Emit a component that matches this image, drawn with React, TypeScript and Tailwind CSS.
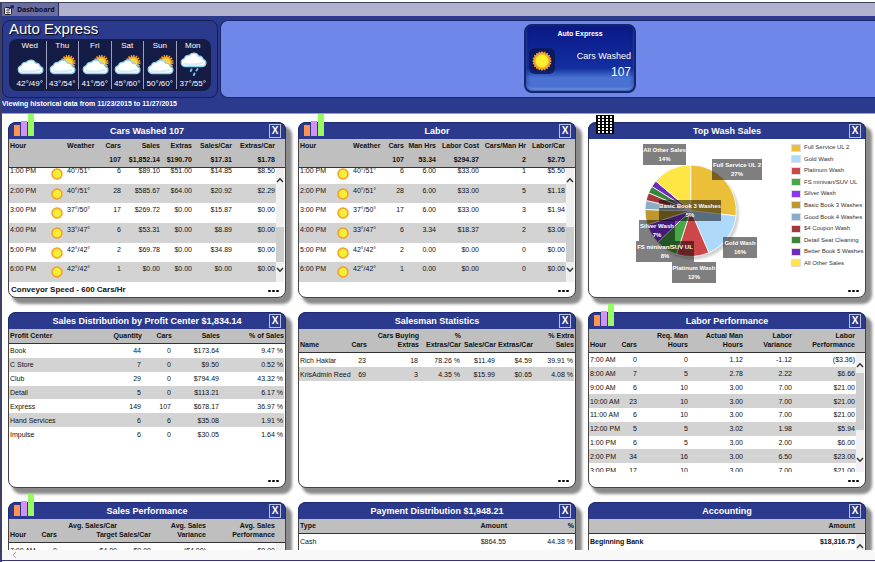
import type { ReactNode } from 'react';
import clsx from 'clsx';

// -------------------------------------------------------------------- data --

type Column = {
  label: string[];
  width?: string;
  total?: string;
  left?: boolean;
};

type Sky = 'cloudy' | 'partly' | 'rain';

const FORECAST: { day: string; temp: string; sky: Sky }[] = [
  { day: 'Wed', temp: '42°/49°', sky: 'cloudy' },
  { day: 'Thu', temp: '43°/54°', sky: 'partly' },
  { day: 'Fri', temp: '41°/56°', sky: 'partly' },
  { day: 'Sat', temp: '45°/60°', sky: 'partly' },
  { day: 'Sun', temp: '50°/60°', sky: 'partly' },
  { day: 'Mon', temp: '37°/55°', sky: 'rain' },
];

const CARS_COLUMNS: Column[] = [
  { label: ['Hour'], left: true, total: '' },
  { label: ['Weather'], left: true, width: 'w-[54px]', total: '' },
  { label: ['Cars'], width: 'w-[18px]', total: '107' },
  { label: ['Sales'], width: 'w-[39px]', total: '$1,852.14' },
  { label: ['Extras'], width: 'w-[32px]', total: '$190.70' },
  { label: ['Sales/Car'], width: 'w-[40px]', total: '$17.31' },
  { label: ['Extras/Car'], width: 'w-[43px]', total: '$1.78' },
];

const CARS_ROWS = [
  ['1:00 PM', '40°/51°', '6', '$89.10', '$51.00', '$14.85', '$8.50'],
  ['2:00 PM', '40°/51°', '28', '$585.67', '$64.00', '$20.92', '$2.29'],
  ['3:00 PM', '37°/50°', '17', '$269.72', '$0.00', '$15.87', '$0.00'],
  ['4:00 PM', '33°/47°', '6', '$53.31', '$0.00', '$8.89', '$0.00'],
  ['5:00 PM', '42°/42°', '2', '$69.78', '$0.00', '$34.89', '$0.00'],
  ['6:00 PM', '42°/42°', '1', '$0.00', '$0.00', '$0.00', '$0.00'],
];

const LABOR_COLUMNS: Column[] = [
  { label: ['Hour'], left: true, total: '' },
  { label: ['Weather'], left: true, width: 'w-[49px]', total: '' },
  { label: ['Cars'], width: 'w-[20px]', total: '107' },
  { label: ['Man Hrs'], width: 'w-[32px]', total: '53.34' },
  { label: ['Labor Cost'], width: 'w-[43px]', total: '$294.37' },
  { label: ['Cars/Man Hr'], width: 'w-[47px]', total: '2' },
  { label: ['Labor/Car'], width: 'w-[39px]', total: '$2.75' },
];

const LABOR_ROWS = [
  ['1:00 PM', '40°/51°', '6', '6.00', '$33.00', '1', '$5.50'],
  ['2:00 PM', '40°/51°', '28', '6.00', '$33.00', '5', '$1.18'],
  ['3:00 PM', '37°/50°', '17', '6.00', '$33.00', '3', '$1.94'],
  ['4:00 PM', '33°/47°', '6', '3.34', '$18.37', '2', '$3.06'],
  ['5:00 PM', '42°/42°', '2', '0.00', '$0.00', '0', '$0.00'],
  ['6:00 PM', '42°/42°', '1', '0.00', '$0.00', '0', '$0.00'],
];

const PROFIT_COLUMNS: Column[] = [
  { label: ['Profit Center'], left: true },
  { label: ['Quantity'], width: 'w-[40px]' },
  { label: ['Cars'], width: 'w-[30px]' },
  { label: ['Sales'], width: 'w-[48px]' },
  { label: ['% of Sales'], width: 'w-[64px]' },
];

const PROFIT_ROWS = [
  ['Book', '44', '0', '$173.64', '9.47 %'],
  ['C Store', '7', '0', '$9.50', '0.52 %'],
  ['Club', '29', '0', '$794.49', '43.32 %'],
  ['Detail', '5', '0', '$113.21', '6.17 %'],
  ['Express', '149', '107', '$678.17', '36.97 %'],
  ['Hand Services', '6', '6', '$35.08', '1.91 %'],
  ['Impulse', '6', '0', '$30.05', '1.64 %'],
];

const SALESMAN_COLUMNS: Column[] = [
  { label: ['Name'], left: true },
  { label: ['Cars'], width: 'w-[18px]' },
  { label: ['Cars Buying', 'Extras'], width: 'w-[52px]' },
  { label: ['%', 'Extras/Car'], width: 'w-[42px]' },
  { label: ['Sales/Car'], width: 'w-[35px]' },
  { label: ['Extras/Car'], width: 'w-[37px]' },
  { label: ['% Extra', 'Sales'], width: 'w-[41px]' },
];

const SALESMAN_ROWS = [
  ['Rich Haklar', '23', '18', '78.26 %', '$11.49', '$4.59', '39.91 %'],
  ['KrisAdmin Reed', '69', '3', '4.35 %', '$15.99', '$0.65', '4.08 %'],
];

const PERFORMANCE_COLUMNS: Column[] = [
  { label: ['Hour'], left: true },
  { label: ['Cars'], width: 'w-[18px]' },
  { label: ['Req. Man', 'Hours'], width: 'w-[51px]' },
  { label: ['Actual Man', 'Hours'], width: 'w-[55px]' },
  { label: ['Labor', 'Variance'], width: 'w-[49px]' },
  { label: ['Labor', 'Performance'], width: 'w-[63px]' },
];

const PERFORMANCE_ROWS = [
  ['7:00 AM', '0', '0', '1.12', '-1.12', '($3.36)'],
  ['8:00 AM', '7', '5', '2.78', '2.22', '$6.66'],
  ['9:00 AM', '6', '10', '3.00', '7.00', '$21.00'],
  ['10:00 AM', '23', '10', '3.00', '7.00', '$21.00'],
  ['11:00 AM', '6', '10', '3.00', '7.00', '$21.00'],
  ['12:00 PM', '5', '5', '3.02', '1.98', '$5.94'],
  ['1:00 PM', '6', '5', '3.00', '2.00', '$6.00'],
  ['2:00 PM', '34', '16', '3.00', '6.50', '$23.00'],
  ['3:00 PM', '17', '10', '3.00', '7.00', '$21.00'],
];

const SALES_PERFORMANCE_COLUMNS: Column[] = [
  { label: ['Hour'], left: true },
  { label: ['Cars'], width: 'w-[18px]' },
  { label: ['Avg. Sales/Car', 'Target'], width: 'w-[60px]' },
  { label: ['Sales/Car'], width: 'w-[34px]' },
  { label: ['Avg. Sales', 'Variance'], width: 'w-[55px]' },
  { label: ['Avg. Sales', 'Performance'], width: 'w-[69px]' },
];

const SALES_PERFORMANCE_ROWS = [['7:00 AM', '0', '$4.00', '$0.00', '($4.00)', '$0.00']];

const PAYMENT_COLUMNS: Column[] = [
  { label: ['Type'], left: true },
  { label: ['Amount'], width: 'w-[60px]' },
  { label: ['%'], width: 'w-[67px]' },
];

const ACCOUNTING_COLUMNS: Column[] = [
  { label: [''], left: true },
  { label: ['Amount'], width: 'w-[80px]' },
];

// share is the slice's part of the whole, in percent
const WASHES = [
  { name: 'Full Service UL 2', share: 26.8, color: '#ecbf3b' },
  { name: 'Gold Wash', share: 16.7, color: '#aed9fb' },
  { name: 'Platinum Wash', share: 11.5, color: '#cd474a' },
  { name: 'FS minivan/SUV UL', share: 7.8, color: '#48a848' },
  { name: 'Silver Wash', share: 7.2, color: '#8a35ee' },
  { name: 'Basic Book 3 Washes', share: 5.4, color: '#be982f' },
  { name: 'Good Book 4 Washes', share: 3.2, color: '#8badca' },
  { name: '$4 Coupon Wash', share: 2.8, color: '#a3383b' },
  { name: 'Detail Seat Cleaning', share: 2.5, color: '#39873a' },
  { name: 'Better Book 5 Washes', share: 2.3, color: '#6e2abe' },
  { name: 'All Other Sales', share: 13.8, color: '#ffe645' },
];

const PIE_LABELS = [
  { name: 'All Other Sales', pct: '14%', x: 54, y: 5, w: 43 },
  { name: 'Full Service UL 2', pct: '27%', x: 123, y: 20, w: 50 },
  { name: 'Silver Wash', pct: '7%', x: 50, y: 81, w: 36 },
  { name: 'FS minivan/SUV UL', pct: '8%', x: 47, y: 102, w: 58 },
  { name: 'Platinum Wash', pct: '12%', x: 83, y: 123, w: 44 },
  { name: 'Gold Wash', pct: '16%', x: 134, y: 98, w: 34 },
  { name: 'Basic Book 3 Washes', pct: '5%', x: 70, y: 61, w: 62 },
];

// ------------------------------------------------------------------- icons --

const CLOUD =
  'M6 19.5a4 4 0 0 1-.6-7.9 4 4 0 0 1 4.8-3.2 5.6 5.6 0 0 1 9.6.9 3.6 3.6 0 0 1 4.4 3.3 3.5 3.5 0 0 1-.6 6.9z';

function SkyIcon({ sky }: { sky: Sky }) {
  return (
    <svg viewBox="0 0 28 26" className="h-[26px] w-7" aria-hidden="true">
      {sky === 'partly' && (
        <>
          <circle cx="20" cy="11.500" r="6.500" fill="none" stroke="#f5a02c" strokeWidth="2" strokeDasharray="1.5 1" />
          <circle cx="20" cy="11.500" r="5.900" fill="#f8a52c" />
          <circle cx="20" cy="11.500" r="4.300" fill="#fdd83c" />
        </>
      )}
      <g transform={sky === 'rain' ? 'translate(0 -4)' : 'translate(0 3)'}>
        <path d={CLOUD} fill="#fff" stroke="#8fd0ec" strokeWidth="1.3" />
        <path d="M5 16.5q9 2 19-.5" fill="none" stroke="#d3eef9" strokeWidth="2" />
      </g>
      {sky === 'rain' && (
        <g stroke="#6cc0e8" strokeWidth="2" strokeLinecap="round">
          <path d="M12.500 18.500l-.8 1.500M18.500 18l-1 1.500M15.500 22.500l-.7 1.500" />
        </g>
      )}
    </svg>
  );
}

function SunIcon() {
  return (
    <svg viewBox="0 0 12 12" className="size-3 shrink-0" aria-hidden="true">
      <circle cx="6" cy="6" r="5" fill="#f8ee35" stroke="#f59a23" strokeWidth="1.400" />
    </svg>
  );
}

function BurstIcon() {
  const points = Array.from({ length: 40 }, (_, i) => {
    const a = (i * Math.PI) / 20;
    const r = i % 2 ? 8.3 : 10;
    return `${11 + r * Math.sin(a)},${11 - r * Math.cos(a)}`;
  }).join(' ');
  return (
    <svg viewBox="0 0 22 22" className="size-[22px]" aria-hidden="true">
      <polygon points={points} fill="#f9a12b" />
      <circle cx="11" cy="11" r="6.5" fill="#fbf02f" />
    </svg>
  );
}

function BarsIcon() {
  return (
    <svg viewBox="0 0 21 22" className="h-[22px] w-[21px]" aria-hidden="true">
      <rect x="0" y="11" width="6" height="11" fill="#ff9350" />
      <rect x="7" y="7" width="6" height="15" fill="#d191f5" />
      <rect x="14" y="0" width="6" height="22" fill="#97fb62" />
    </svg>
  );
}

function GridIcon() {
  return (
    <svg viewBox="-2 -1 20 20" className="h-5 w-5" aria-hidden="true">
      <rect width="18" height="19" fill="#000" />
      {[0, 1, 2, 3].map((c) =>
        [0, 1, 2, 3, 4, 5].map((r) => (
          <rect key={`${c}-${r}`} x={2 + c * 4} y={1 + r * 3} width="2" height="2" fill="#fff" />
        )),
      )}
    </svg>
  );
}

function Chevron({ down }: { down?: boolean }) {
  return (
    <svg viewBox="0 0 8 6" className="h-1.5 w-2" fill="none" stroke="#333" strokeWidth="1.400" aria-hidden="true">
      <path d={down ? 'M1 1l3 3.200L7 1' : 'M1 5l3-3.200L7 5'} />
    </svg>
  );
}

// -------------------------------------------------------------- components --

function Scrollbar({ thumb }: { thumb: string }) {
  return (
    <div className="flex w-2 shrink-0 flex-col bg-[#f0f0f0]">
      <button type="button" aria-label="Scroll up" className="flex h-5 shrink-0 items-center justify-center pt-1">
        <Chevron />
      </button>
      <div className="flex min-h-0 flex-1 flex-col">
        <div className={clsx('w-full shrink-0 bg-[#cdcdcd]', thumb)} />
      </div>
      <button type="button" aria-label="Scroll down" className="flex h-5 shrink-0 items-center justify-center pb-1">
        <Chevron down />
      </button>
    </div>
  );
}

type GridProps = {
  columns: Column[];
  rows: string[][];
  bodyHeight?: string;
  thumb?: string;
  weather?: boolean;
  bold?: boolean;
};

function DataGrid({ columns, rows, bodyHeight, thumb, weather, bold }: GridProps) {
  const hasTotals = columns.some((c) => c.total !== undefined);

  return (
    <>
      <div className={clsx('border-b border-[#333] bg-[#bfbfbf] pt-0.5 pb-[3px]', thumb && 'pr-[9px]')}>
        <table className="w-full table-fixed border-collapse leading-[9px] font-bold">
          <thead>
            <tr>
              {columns.map((c, i) => (
                <th
                  key={i}
                  scope="col"
                  className={clsx(
                    'px-px py-0 align-bottom whitespace-nowrap',
                    c.width,
                    c.left ? 'text-left' : 'text-right',
                    weather && i === 1 && 'pl-[17px]',
                  )}
                >
                  {c.label.map((line) => (
                    <div key={line}>{line}</div>
                  ))}
                </th>
              ))}
            </tr>
            {hasTotals && (
              <tr>
                {columns.map((c, i) => (
                  <td key={i} className="px-px pt-[5px] pb-0 text-right">
                    {c.total}
                  </td>
                ))}
              </tr>
            )}
          </thead>
        </table>
      </div>
      <div className="flex min-h-0 flex-1 pr-px">
        <div className={clsx('flex min-w-0 flex-1 flex-col overflow-hidden', weather && 'justify-end')}>
          <table className={clsx('w-full shrink-0 table-fixed border-collapse leading-[9px]', bodyHeight, bold && 'font-bold')}>
            <tbody>
              {rows.map((row) => (
                <tr key={row[0]} className="even:bg-[#d3d3d3]">
                  {row.map((cell, i) => (
                    <td
                      key={i}
                      className={clsx(
                        'px-px whitespace-nowrap',
                        columns[i].width,
                        columns[i].left ? 'text-left' : 'text-right',
                        weather ? 'pt-0.5 pb-0 align-top' : 'py-0 align-middle',
                      )}
                    >
                      {weather && i === 1 ? (
                        <div className="flex items-start gap-1">
                          <span className="pt-0.5">
                            <SunIcon />
                          </span>
                          {cell}
                        </div>
                      ) : (
                        cell
                      )}
                    </td>
                  ))}
                </tr>
              ))}
            </tbody>
          </table>
        </div>
        {thumb && <Scrollbar thumb={thumb} />}
      </div>
    </>
  );
}

function Panel({ title, icon, footer, children }: { title: string; icon?: ReactNode; footer?: string; children: ReactNode }) {
  return (
    <section className="relative flex h-44 flex-col rounded-lg border border-[#444] bg-white shadow-[5px_5px_3px_1px_#8a8a8a]">
      {icon && <div className="absolute -top-[9px] left-[5px]">{icon}</div>}
      <header className="-mx-px -mt-px flex h-[17px] shrink-0 items-center rounded-t-lg border border-b-0 border-[#1d2a72] bg-[#2b3a8c] px-1 text-white">
        <h2 className="flex-1 pl-3 text-center text-[9px] leading-3 font-bold">{title}</h2>
        <button
          type="button"
          aria-label={`Close ${title}`}
          className="flex h-3.5 w-3 items-center justify-center border border-[#b9bfdf] text-[10px] leading-3 font-bold"
        >
          X
        </button>
      </header>
      {children}
      <footer className="flex h-[15px] shrink-0 items-center justify-between pr-1.5 pl-0.5">
        <span className="text-[8px] leading-3 font-bold">{footer}</span>
        <button type="button" aria-label={`More about ${title}`} className="flex gap-px pt-0.5">
          <span className="h-0.5 w-[3px] rounded-full bg-black" />
          <span className="h-0.5 w-[3px] rounded-full bg-black" />
          <span className="h-0.5 w-[3px] rounded-full bg-black" />
        </button>
      </footer>
    </section>
  );
}

function WashPie() {
  const cx = 101.7;
  const cy = 71.7;
  const r = 45.7;
  const at = (pct: number) => {
    const a = (pct / 100) * 2 * Math.PI;
    return `${(cx + r * Math.sin(a)).toFixed(2)} ${(cy - r * Math.cos(a)).toFixed(2)}`;
  };
  let sum = 0;
  const slices = WASHES.map((w) => {
    const from = sum;
    sum += w.share;
    return { ...w, d: `M${cx} ${cy}L${at(from)}A${r} ${r} 0 0 1 ${at(sum)}Z` };
  });

  return (
    <svg viewBox="0 0 190 144" className="h-36 w-[190px] shrink-0" role="img" aria-label="Top wash sales by share">
      <defs>
        <filter id="pie-shadow" x="-20%" y="-20%" width="140%" height="140%">
          <feGaussianBlur stdDeviation="1.2" />
        </filter>
      </defs>
      <circle cx={cx + 2.500} cy={cy + 3} r={r} fill="#000" opacity="0.18" filter="url(#pie-shadow)" />
      {slices.map((s) => (
        <path key={s.name} d={s.d} fill={s.color} stroke="#fff" strokeWidth="0.8" strokeLinejoin="round" />
      ))}
      {PIE_LABELS.map((l) => (
        <g key={l.name}>
          <rect x={l.x} y={l.y} width={l.w} height="21" fill="#000" fillOpacity="0.5" />
          <g fill="#fff" fontSize="6" fontWeight="700" textAnchor="middle">
            <text x={l.x + l.w / 2} y={l.y + 8}>{l.name}</text>
            <text x={l.x + l.w / 2} y={l.y + 17}>{l.pct}</text>
          </g>
        </g>
      ))}
    </svg>
  );
}

function TopHeader() {
  return (
    <header className="bg-[#2b3a8c] pt-[3px] pb-1 text-white">
      <div className="flex gap-0.5">
        <section className="w-[216px] shrink-0 rounded-lg border border-[#161f52] px-1.5 pb-1.5">
          <h1 className="pb-0.5 text-[15px] leading-4 [text-shadow:1px_1px_1px_#000]">Auto Express</h1>
          <ul className="grid grid-cols-6 rounded-lg bg-[#141b44] py-0.5 pr-0.5 pl-[5px]">
            {FORECAST.map((f) => (
              <li
                key={f.day}
                className="flex flex-col items-center border-r border-[#9aa0bd] text-[8px] leading-[10px] last:border-r-0"
              >
                <span>{f.day}</span>
                <SkyIcon sky={f.sky} />
                <span className="pt-0.5">{f.temp}</span>
              </li>
            ))}
          </ul>
        </section>
        <section className="flex flex-1 items-center justify-center rounded-l-lg border border-r-0 border-[#1b2766] bg-[#6e87e8] pb-0.5 pl-16">
          <div className="flex h-[69px] w-28 flex-col rounded-lg border-2 border-[#11266f] bg-linear-to-b from-[#0c1a8a] from-5% via-[#132f9f] via-65% to-[#4a72d2] to-80% px-[3px] pt-1 pb-1.5 text-right shadow-[inset_0_0_4px_#0a1c78,inset_0_-3px_2px_#7ba5f5]">
            <h2 className="text-center text-[7px] leading-[8px] font-bold">Auto Express</h2>
            <div className="flex flex-1 items-center justify-between">
              <div className="rounded-md bg-[#0b1650]/80 p-0.5">
                <BurstIcon />
              </div>
              <div className="pt-1.5">
                <p className="text-[9px] leading-4">Cars Washed</p>
                <p className="text-[12px] leading-4">107</p>
              </div>
            </div>
          </div>
        </section>
      </div>
      <p className="pt-px text-[7px] leading-[10px] font-bold">
        Viewing historical data from 11/23/2015 to 11/27/2015
      </p>
    </header>
  );
}

// --------------------------------------------------------------------- app --

export default function App() {
  return (
    <div className="flex h-screen flex-col overflow-hidden bg-white pt-0.5 font-['Liberation_Sans',Arial,sans-serif] text-[7px] text-[#111]">
      <div className="flex min-h-0 flex-1 flex-col border-t border-l-2 border-[#3d3f63]">
        <nav className="flex h-3.5 shrink-0 border-b border-[#2b3a8c] bg-[#b0b1cc]">
          <button
            type="button"
            className="flex items-center gap-[3px] border-r border-[#2c2d55] bg-[#6a6da0] pr-[3px] pl-0.5 font-['Noto_Sans',sans-serif] leading-3 font-bold text-[#0d0f2e]"
          >
            <svg viewBox="0 0 10 10" className="size-2.5" aria-hidden="true">
              <rect x=".5" y="2.500" width="7" height="7" rx="1" fill="#e6e6ee" stroke="#222" />
              <path d="M2 5h4M2 7.500h4M4 3v6" stroke="#555" strokeWidth=".8" />
              <path d="M5 4l4-3M6.500.800h2.700v2.700" stroke="#1b2350" strokeWidth="1.200" fill="none" />
            </svg>
            Dashboard
          </button>
        </nav>

        <TopHeader />

        <main className="min-h-0 flex-1 overflow-hidden border-t border-[#9a9fc4] pt-2 pr-[9px] pl-1.5">
          <div className="grid grid-cols-3 gap-x-3 gap-y-3.5">
            <Panel title="Cars Washed 107" icon={<BarsIcon />} footer="Conveyor Speed - 600 Cars/Hr">
              <DataGrid columns={CARS_COLUMNS} rows={CARS_ROWS} bodyHeight="h-[118px]" thumb="mt-auto h-[35px]" weather />
            </Panel>

            <Panel title="Labor" icon={<BarsIcon />}>
              <DataGrid columns={LABOR_COLUMNS} rows={LABOR_ROWS} bodyHeight="h-[118px]" thumb="mt-auto h-[35px]" weather />
            </Panel>

            <Panel title="Top Wash Sales" icon={<GridIcon />}>
              <div className="flex min-h-0 flex-1 justify-between">
                <WashPie />
                <ul className="mt-[3px] flex h-[127px] w-[74px] flex-col justify-between text-[6px] leading-[11px] text-[#333]">
                  {WASHES.map((w) => (
                    <li key={w.name} className="flex items-center gap-[3px] whitespace-nowrap">
                      <span
                        className="h-2 w-2.5 shrink-0 border border-[#ddd]"
                        style={{ backgroundColor: w.color }}
                      />
                      {w.name}
                    </li>
                  ))}
                </ul>
              </div>
            </Panel>

            <Panel title="Sales Distribution by Profit Center $1,834.14">
              <DataGrid columns={PROFIT_COLUMNS} rows={PROFIT_ROWS} bodyHeight="h-[97px]" />
            </Panel>

            <Panel title="Salesman Statistics">
              <DataGrid columns={SALESMAN_COLUMNS} rows={SALESMAN_ROWS} bodyHeight="h-7" />
            </Panel>

            <Panel title="Labor Performance" icon={<BarsIcon />}>
              <DataGrid columns={PERFORMANCE_COLUMNS} rows={PERFORMANCE_ROWS} bodyHeight="h-[124px]" thumb="h-[57px]" />
            </Panel>

            <Panel title="Sales Performance" icon={<BarsIcon />}>
              <DataGrid columns={SALES_PERFORMANCE_COLUMNS} rows={SALES_PERFORMANCE_ROWS} bodyHeight="h-3.5" thumb="h-[57px]" />
            </Panel>

            <Panel title="Payment Distribution $1,948.21">
              <DataGrid columns={PAYMENT_COLUMNS} rows={[['Cash', '$864.55', '44.38 %']]} bodyHeight="h-3.5" />
            </Panel>

            <Panel title="Accounting">
              <DataGrid columns={ACCOUNTING_COLUMNS} rows={[['Beginning Bank', '$18,316.75']]} bodyHeight="h-3.5" thumb="h-[57px]" bold />
            </Panel>
          </div>
        </main>

        <div className="mb-px flex h-[11px] shrink-0 items-center border-b border-[#34376f] bg-[#f8f8f8] pl-2.5">
          <button type="button" aria-label="Scroll left">
            <svg viewBox="0 0 5 8" className="h-2 w-[5px]" fill="none" stroke="#aaa" aria-hidden="true">
              <path d="M4 1L1 4l3 3" />
            </svg>
          </button>
        </div>
      </div>
    </div>
  );
}
